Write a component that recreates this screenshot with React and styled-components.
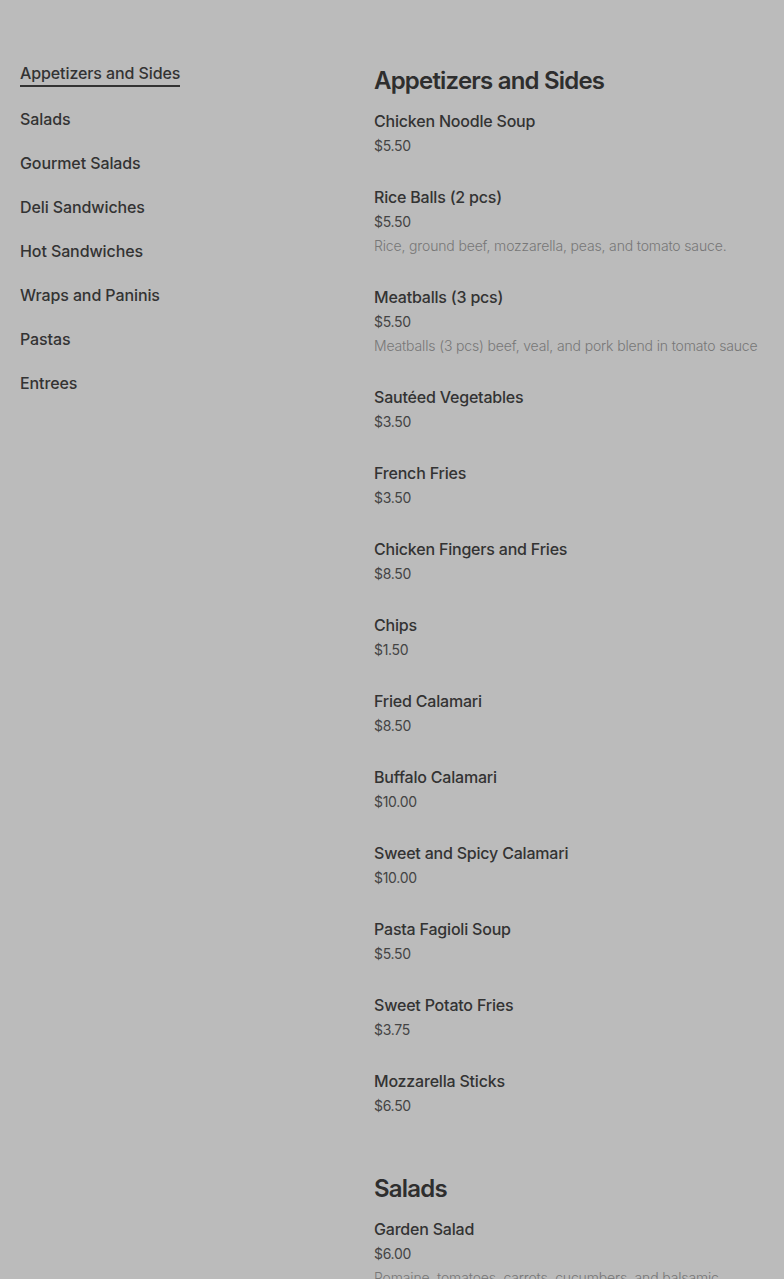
import React from 'react';
import styled, { createGlobalStyle } from 'styled-components';

const GlobalStyle = createGlobalStyle`
  html, body {
    margin: 0;
    padding: 0;
    background: #bbbbbb;
  }
  body {
    font-family: Inter, "Noto Sans", sans-serif;
    color: #333333;
  }
`;

const Page = styled.div`
  display: grid;
  grid-template-columns: 354px 1fr;
  padding: 61px 20px 0 20px;
  min-height: 100vh;
  box-sizing: border-box;
`;

const Nav = styled.nav`
  display: flex;
  flex-direction: column;
  align-items: flex-start;
  gap: 20px;
`;

const NavLink = styled.a`
  font-size: 16px;
  line-height: 24px;
  font-weight: 500;
  color: #333;
  text-decoration: none;
  border-bottom: ${p => (p.$active ? '2px solid #333' : 'none')};
  letter-spacing: -0.1px;
`;

const Menu = styled.main`
  display: flex;
  flex-direction: column;
  padding-top: 4px;
  max-width: 400px;
`;

const Section = styled.section`
  margin-bottom: 28px;
`;

const SectionTitle = styled.h2`
  margin: 0 0 12px 0;
  font-size: 24px;
  line-height: 32px;
  font-weight: 600;
  letter-spacing: -0.8px;
  color: #2e2e2e;
`;

const Item = styled.div`
  display: flex;
  flex-direction: column;
  margin-bottom: 27px;
`;

const ItemName = styled.div`
  font-size: 16px;
  line-height: 24px;
  font-weight: 500;
  color: #333;
  letter-spacing: -0.2px;
`;

const Price = styled.div`
  font-size: 14px;
  line-height: 24px;
  color: #444;
  margin-top: 1px;
  letter-spacing: -0.3px;
`;

const Desc = styled.div`
  font-size: 14px;
  line-height: 24px;
  color: #777;
  font-weight: 300;
  letter-spacing: -0.15px;
`;

const categories = [
  'Appetizers and Sides',
  'Salads',
  'Gourmet Salads',
  'Deli Sandwiches',
  'Hot Sandwiches',
  'Wraps and Paninis',
  'Pastas',
  'Entrees',
];

const sections = [
  {
    title: 'Appetizers and Sides',
    items: [
      { name: 'Chicken Noodle Soup', price: '$5.50' },
      { name: 'Rice Balls (2 pcs)', price: '$5.50', desc: 'Rice, ground beef, mozzarella, peas, and tomato sauce.' },
      { name: 'Meatballs (3 pcs)', price: '$5.50', desc: 'Meatballs (3 pcs) beef, veal, and pork blend in tomato sauce' },
      { name: 'Sautéed Vegetables', price: '$3.50' },
      { name: 'French Fries', price: '$3.50' },
      { name: 'Chicken Fingers and Fries', price: '$8.50' },
      { name: 'Chips', price: '$1.50' },
      { name: 'Fried Calamari', price: '$8.50' },
      { name: 'Buffalo Calamari', price: '$10.00' },
      { name: 'Sweet and Spicy Calamari', price: '$10.00' },
      { name: 'Pasta Fagioli Soup', price: '$5.50' },
      { name: 'Sweet Potato Fries', price: '$3.75' },
      { name: 'Mozzarella Sticks', price: '$6.50' },
    ],
  },
  {
    title: 'Salads',
    items: [
      { name: 'Garden Salad', price: '$6.00', desc: 'Romaine, tomatoes, carrots, cucumbers, and balsamic vinaigrette.' },
    ],
  },
];

export default function App() {
  return (
    <>
      <GlobalStyle />
      <Page>
        <Nav>
          {categories.map((c, i) => (
            <NavLink key={c} href="#" $active={i === 0}>{c}</NavLink>
          ))}
        </Nav>
        <Menu>
          {sections.map(s => (
            <Section key={s.title}>
              <SectionTitle>{s.title}</SectionTitle>
              {s.items.map(it => (
                <Item key={it.name}>
                  <ItemName>{it.name}</ItemName>
                  <Price>{it.price}</Price>
                  {it.desc && <Desc>{it.desc}</Desc>}
                </Item>
              ))}
            </Section>
          ))}
        </Menu>
      </Page>
    </>
  );
}
